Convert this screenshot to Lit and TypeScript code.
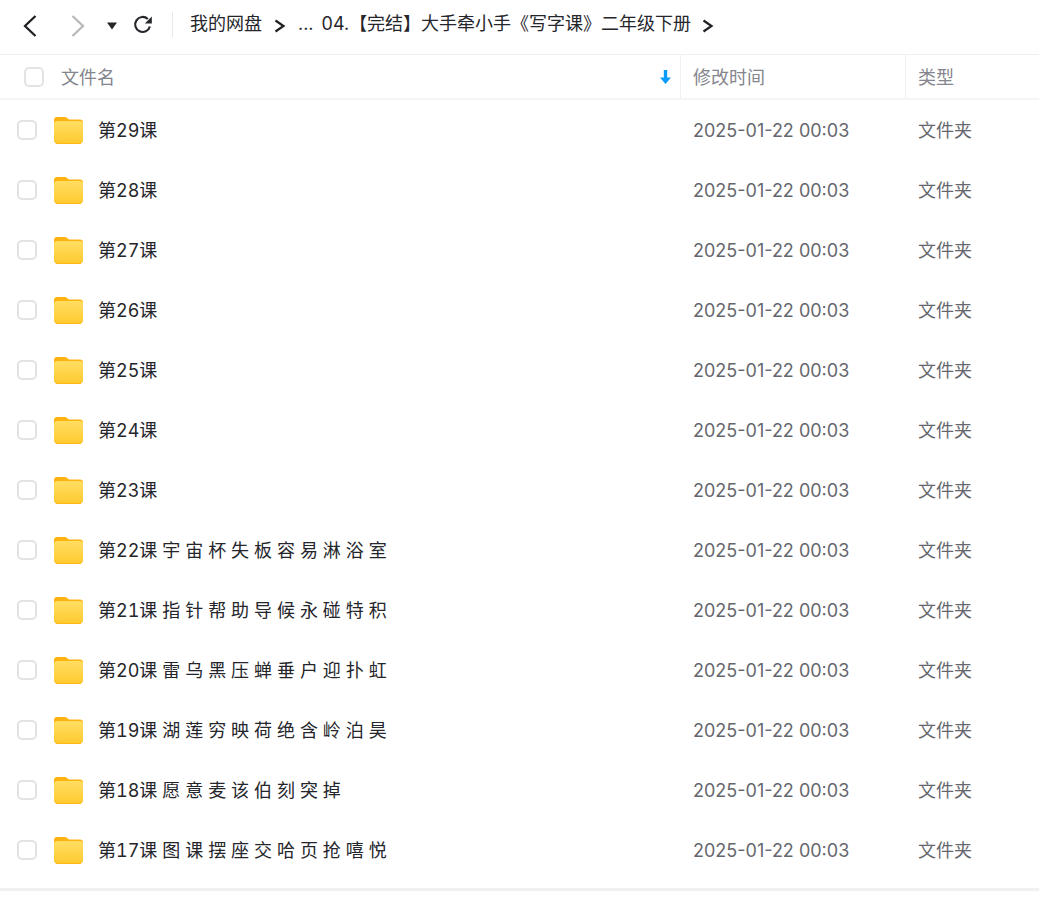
import { LitElement, html, css, svg } from "lit";
import { customElement } from "lit/decorators.js";

const ROWS = [
  "第29课", "第28课", "第27课", "第26课", "第25课", "第24课", "第23课",
  "第22课 宇 宙 杯 失 板 容 易 淋 浴 室",
  "第21课 指 针 帮 助 导 候 永 碰 特 积",
  "第20课 雷 乌 黑 压 蝉 垂 户 迎 扑 虹",
  "第19课 湖 莲 穷 映 荷 绝 含 岭 泊 昊",
  "第18课 愿 意 麦 该 伯 刻 突 掉",
  "第17课 图 课 摆 座 交 哈 页 抢 嘻 悦",
];

const folder = svg`<svg class="folder" width="29" height="27" viewBox="0 0 29 27">
  <defs><linearGradient id="fg" x1="0" y1="0" x2="0" y2="1"><stop offset="0" stop-color="#ffde62"/><stop offset="1" stop-color="#ffc92f"/></linearGradient></defs>
  <path d="M0 3C0 1.300 1.300 0 3 0h7.500c1.200 0 2 .4 2.900 1.200L15 2.500h11c1.700 0 3 1.300 3 3v6H0z" fill="#ffb310"/>
  <path d="M0 7c0-1.700 1.300-3 3-3h23c1.700 0 3 1.300 3 3v16c0 2.200-1.800 4-4 4H4c-2.200 0-4-1.800-4-4z" fill="url(#fg)"/>
  <path d="M0 22.500V23c0 2.200 1.800 4 4 4h21c2.200 0 4-1.800 4-4v-.5c0 2.200-1.800 3.500-4 3.500H4c-2.200 0-4-1.300-4-3.500z" fill="#ffb714"/>
</svg>`;

const sep = svg`<svg width="12" height="14" viewBox="0 0 12 14"><path d="M1.500 1.500L9.500 7l-8 5.500" fill="none" stroke="#1f2024" stroke-width="2.200"/></svg>`;

@customElement("app-root")
export class AppRoot extends LitElement {
  static styles = css`
    :host { display: block; width: 1039px; height: 906px; background: #fff; overflow: hidden;
      font-family: Inter, "Noto Sans CJK SC", sans-serif; font-size: 18px; color: #25262b; }
    .toolbar { height: 54px; display: flex; align-items: center; border-bottom: 1px solid #f0f0f2; }
    .nav { display: flex; align-items: center; width: 172px; height: 25px; flex: none; align-self: flex-start; margin-top: 12px; border-right: 1px solid #e8e8e8; }
    .nav svg { display: block; flex: none; }
    .back { margin: 3px 0 0 23px; }
    .fwd { margin: 3px 0 0 34px; }
    .drop { margin: 3px 0 0 22px; }
    .refresh { margin: 1px 0 0 16px; }
    .crumbs { display: flex; align-items: center; padding-left: 17px; white-space: nowrap; line-height: 26px; }
    .crumbs svg { display: block; flex: none; }
    .text { margin-bottom: 6px; }
    .sep1 { margin: 0 12px 3px 12px; }
    .dots { margin-right: 8px; }
    .sep2 { margin: 0 0 3px 11px; }
    .head { display: grid; grid-template-columns: 680px 225px 134px; height: 43px; border-bottom: 2px solid #f5f5f6; color: #84858d; }
    .hcell { display: flex; align-items: center; padding-left: 12px; border-left: 1px solid #f0f0f2; }
    .hcell.first { border-left: 0; padding-left: 24px; }
    .hcell.first .box { margin-right: 17px; }
    .hlabel { margin-bottom: 2px; }
    .sort { margin-left: auto; margin-right: 9px; display: block; }
    .box { width: 20px; height: 20px; box-sizing: border-box; border: 2px solid #e3e3e5; border-radius: 5px; background: #fff; flex: none; }
    .row { display: grid; grid-template-columns: 680px 225px 134px; height: 60px; align-items: center; }
    .name { display: flex; align-items: center; padding-left: 17px; white-space: pre; font-variant-numeric: tabular-nums; word-spacing: 0.1px; }
    .name .label { margin-bottom: 2px; }
    .name .folder { margin: 1px 15px 0 17px; display: block; flex: none; }
    .date, .kind { color: #66676e; padding-left: 13px; white-space: nowrap; }
    .kind { margin-bottom: 2px; }
    .foot { height: 3px; background: #f0f0f2; margin-top: 8px; }
  `;

  render() {
    return html`
      <div class="toolbar">
        <div class="nav">
          <span class="back"><svg width="14" height="22" viewBox="0 0 14 22"><path d="M12.500 1L2 11l10.500 10" fill="none" stroke="#1f2024" stroke-width="2.300"/></svg></span>
          <span class="fwd"><svg width="14" height="22" viewBox="0 0 14 22"><path d="M1.500 1L12 11 1.500 21" fill="none" stroke="#b9b9bc" stroke-width="2.300"/></svg></span>
          <span class="drop"><svg width="10" height="8" viewBox="0 0 10 8"><path d="M0 .5h10L5 7.500z" fill="#25262b"/></svg></span>
          <span class="refresh"><svg width="20" height="20" viewBox="0 0 20 20"><path d="M16.900 11.500A7.500 7.500 0 1 1 14.800 4" fill="none" stroke="#25262b" stroke-width="2.200"/><path d="M18.800 1.500v7h-7z" fill="#25262b"/></svg></span>
        </div>
        <div class="crumbs">
          <span class="text">我的网盘</span>
          <span class="sep1">${sep}</span>
          <span class="text dots">...</span>
          <span class="text">04.【完结】大手牵小手《写字课》二年级下册</span>
          <span class="sep2">${sep}</span>
        </div>
      </div>
      <div class="head">
        <div class="hcell first"><span class="box"></span><span class="hlabel">文件名</span>
          <svg class="sort" width="11" height="14" viewBox="0 0 11 14"><path d="M3.800 0h3.400v7.500H11L5.500 14 0 7.500h3.800z" fill="#0a9bff"/></svg>
        </div>
        <div class="hcell"><span class="hlabel">修改时间</span></div>
        <div class="hcell"><span class="hlabel">类型</span></div>
      </div>
      ${ROWS.map((r) => html`
        <div class="row">
          <div class="name"><span class="box"></span>${folder}<span class="label">${r}</span></div>
          <div class="date">2025-01-22 00:03</div>
          <div class="kind">文件夹</div>
        </div>`)}
      <div class="foot"></div>
    `;
  }
}
